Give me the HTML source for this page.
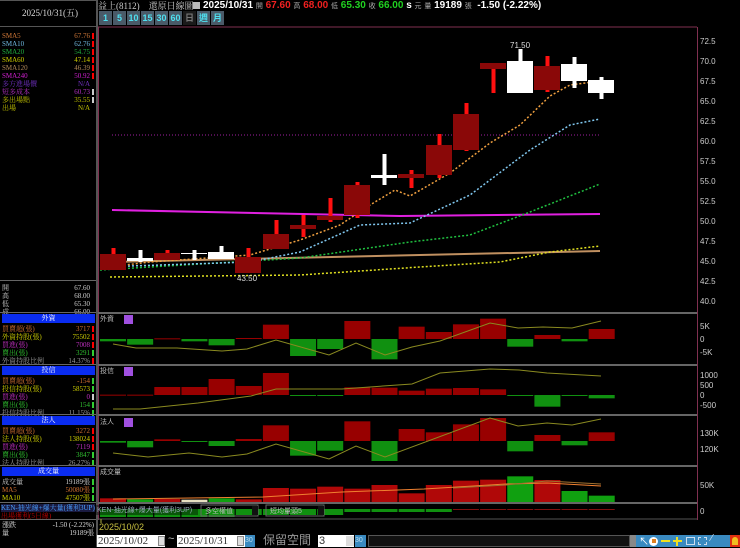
<!DOCTYPE html>
<html><head><meta charset="utf-8">
<style>
*{margin:0;padding:0;box-sizing:border-box}
body{width:740px;height:547px;background:#000;overflow:hidden;position:relative;font-family:"Liberation Sans","Noto Sans CJK TC",sans-serif;color:#ccc}
.a{position:absolute;white-space:nowrap}
.lp{font-size:7px;line-height:8px;font-family:"Liberation Serif","Noto Serif CJK SC",serif}
.r{text-align:right}
.hd{position:absolute;left:2px;width:93px;height:9px;background:#0a2cf0;color:#fff;font-size:7px;line-height:9px;text-align:center;font-family:"Noto Serif CJK SC",serif}
.btn{position:absolute;top:11px;height:14px;width:13px;background:#4a5a68;color:#4fe0f0;font-size:9px;line-height:14px;text-align:center;font-weight:bold}
</style></head><body>
<div class="a" style="left:0;top:0;width:96px;height:27px;border-bottom:1px solid #555;border-top:1px solid #555"></div>
<div class="a lp" style="left:22px;top:9px;font-size:9px;color:#ddd">2025/10/31(五)</div>
<div class="a" style="left:96px;top:0;width:2px;height:547px;background:#555"></div>
<div id="lp"></div>
<div class="a" style="left:0;top:280px;width:96px;height:1px;background:#666"></div>
<div class="hd" style="top:314px">外資</div>
<div class="hd" style="top:366px">投信</div>
<div class="hd" style="top:416px">法人</div>
<div class="hd" style="top:467px">成交量</div>
<div class="a" style="left:0;top:312px;width:96px;height:1px;background:#666"></div>
<div class="a" style="left:0;top:364px;width:96px;height:1px;background:#666"></div>
<div class="a" style="left:0;top:414px;width:96px;height:1px;background:#666"></div>
<div class="a" style="left:0;top:465px;width:96px;height:1px;background:#666"></div>
<div class="a" style="left:0;top:502px;width:96px;height:1px;background:#666"></div>
<div class="a lp" style="left:1px;top:504px;width:94px;height:8px;background:#1a1a40;color:#4aa0ff;overflow:hidden">KEN-抽光線+爆大量(獲利3UP)</div>
<div class="a lp" style="left:1px;top:512px;color:#c00000">出場獲利(5日線)</div>
<div class="a" style="left:0;top:519px;width:96px;height:1px;background:#666"></div>
<div class="a lp" style="left:2px;top:521px;color:#ddd">漲跌</div>
<div class="a lp r" style="left:30px;width:64px;top:521px;color:#ddd">-1.50 (-2.22%)</div>
<div class="a lp" style="left:2px;top:529px;color:#ddd">量</div>
<div class="a lp r" style="left:30px;width:64px;top:529px;color:#ddd">19189張</div>

<div class="a" style="left:98px;top:1px;font-size:9px;line-height:10px;font-family:'Liberation Serif','Noto Serif CJK SC',serif;color:#ccc">益上(8112)&nbsp;&nbsp;&nbsp;&nbsp;還原日線圖</div>
<div class="a" style="left:193px;top:2px;width:7px;height:7px;background:#bbb"></div>
<div class="a" style="left:203px;top:0px;font-size:10px;line-height:12px;font-weight:bold;color:#fff">2025/10/31 <span style="font-size:7px;color:#aaa;font-weight:normal">開</span> <span style="color:#f02020">67.60</span> <span style="font-size:7px;color:#aaa;font-weight:normal">高</span> <span style="color:#f02020">68.00</span> <span style="font-size:7px;color:#aaa;font-weight:normal">低</span> <span style="color:#20d020">65.30</span> <span style="font-size:7px;color:#aaa;font-weight:normal">收</span> <span style="color:#20d020">66.00</span> s <span style="font-size:7px;color:#aaa;font-weight:normal">元</span> <span style="font-size:7px;color:#aaa;font-weight:normal">量</span> 19189 <span style="font-size:7px;color:#aaa;font-weight:normal">張</span> &nbsp;-1.50 (-2.22%)</div>
<div class="btn" style="left:99px">1</div>
<div class="btn" style="left:113px">5</div>
<div class="btn" style="left:127px">10</div>
<div class="btn" style="left:141px">15</div>
<div class="btn" style="left:155px">30</div>
<div class="btn" style="left:169px">60</div>
<div class="btn" style="left:183px;background:#1a1a1a;color:#777">日</div>
<div class="btn" style="left:197px">週</div>
<div class="btn" style="left:211px">月</div>

<svg class="a" style="left:0;top:0" width="740" height="547" id="sv" font-family="Liberation Sans, sans-serif"></svg>

<div class="a" style="left:97px;top:535px;width:68px;height:12px;background:#fff;color:#333;font-size:11px;line-height:12px;padding-left:1px;font-family:'Liberation Serif',serif">2025/10/02</div>
<div class="a" style="left:158px;top:536px;width:7px;height:10px;background:#ddd;border:1px solid #888"></div>
<div class="a" style="left:168px;top:533px;color:#bbb;font-size:11px">~</div>
<div class="a" style="left:177px;top:535px;width:68px;height:12px;background:#fff;color:#333;font-size:11px;line-height:12px;padding-left:1px;font-family:'Liberation Serif',serif">2025/10/31</div>
<div class="a" style="left:237px;top:536px;width:7px;height:10px;background:#ddd;border:1px solid #888"></div>
<div class="a" style="left:245px;top:535px;width:10px;height:12px;background:#3a8ac0;color:#bde;font-size:7px;line-height:12px">30</div>
<div class="a" style="left:263px;top:533px;color:#999;font-size:12px;line-height:14px;font-family:'Noto Sans CJK TC',sans-serif">保留空間</div>
<div class="a" style="left:318px;top:535px;width:36px;height:12px;background:#fff;color:#333;font-size:11px;line-height:12px;padding-left:1px">3</div>
<div class="a" style="left:346px;top:536px;width:8px;height:10px;background:#ddd"></div>
<div class="a" style="left:355px;top:535px;width:11px;height:12px;background:#3a8ac0;color:#bde;font-size:7px;line-height:12px">30</div>
<div class="a" style="left:368px;top:535px;width:262px;height:12px;background:#111;border:1px solid #555"></div>
<div class="a" style="left:630px;top:535px;width:6px;height:12px;background:#888"></div>
<div class="a" style="left:636px;top:535px;width:94px;height:12px;background:#3a8ac0"></div>
<div class="a" style="left:730px;top:535px;width:10px;height:12px;background:#e03010"></div>
<div class="a" style="left:639px;top:533px;color:#fff;font-size:10px">↖</div>
<div class="a" style="left:649px;top:537px;width:9px;height:9px;border-radius:50%;background:#fff"></div>
<div class="a" style="left:652px;top:539px;width:4px;height:4px;background:#e08020"></div>
<div class="a" style="left:661px;top:540px;width:9px;height:2px;background:#f0e020"></div>
<div class="a" style="left:673px;top:540px;width:9px;height:2px;background:#f0e020"></div>
<div class="a" style="left:676px;top:537px;width:2px;height:9px;background:#f0e020"></div>
<div class="a" style="left:686px;top:537px;width:9px;height:8px;border:1px solid #cde"></div>
<div class="a" style="left:698px;top:537px;width:9px;height:8px;border:1px dashed #cde"></div>
<div class="a" style="left:711px;top:533px;color:#cde;font-size:10px">⁄</div>
<div class="a" style="left:732px;top:537px;width:6px;height:8px;border-radius:3px 3px 0 0;background:#f0c020"></div>

<script>
var lp=document.getElementById('lp');
function row(t,v,y,c1,c2,m){var h='<div class="a lp" style="left:2px;top:'+y+'px;color:'+c1+'">'+t+'</div><div class="a lp r" style="left:30px;width:60px;top:'+y+'px;color:'+c2+'">'+v+'</div>';if(m)h+='<div class="a" style="left:92px;top:'+(y+1)+'px;width:2px;height:6px;background:'+m+'"></div>';lp.insertAdjacentHTML('beforeend',h);}
[['SMA5','67.76','#d07838','#d07838','#f00'],['SMA10','62.76','#70b8e0','#70b8e0','#f00'],['SMA20','54.75','#20b040','#20b040','#f00'],['SMA60','47.14','#d0d000','#d0d000','#f00'],['SMA120','46.39','#b08858','#b08858','#f00'],['SMA240','50.92','#d020d0','#d020d0','#f00'],['多方進場價','N/A','#7030c0','#7030c0',''],['短多成本','60.73','#b030c0','#b030c0','#ccc'],['多出場點','35.55','#c0c000','#c0c000','#ccc'],['出場','N/A','#c0c000','#c0c000','']].forEach(function(r,i){row(r[0],r[1],32+i*8,r[2],r[3],r[4]);});
[['開','67.60'],['高','68.00'],['低','65.30'],['成','66.00']].forEach(function(r,i){row(r[0],r[1],284+i*8,'#ccc','#ccc','');});
function blk(y,rows){rows.forEach(function(r,i){row(r[0],r[1],y+i*8,r[2],r[3],r[4]);});}
blk(325,[['買賣超(張)','3717','#d07030','#d07030','#f00'],['外資持股(張)','75502','#d0d000','#d0d000','#f00'],['買進(張)','7008','#c030c0','#c030c0','#f00'],['賣出(張)','3291','#30c030','#30c030','#3c3'],['外資持股比例','14.37%','#999','#999','#f00']]);
blk(377,[['買賣超(張)','-154','#d07030','#d07030','#3c3'],['投信持股(張)','58573','#d0d000','#d0d000','#3c3'],['買進(張)','0','#c030c0','#c030c0','#ccc'],['賣出(張)','154','#30c030','#30c030','#3c3'],['投信持股比例','11.15%','#999','#999','#3c3']]);
blk(427,[['買賣超(張)','3272','#d07030','#d07030','#f00'],['法人持股(張)','138024','#d0d000','#d0d000','#f00'],['買進(張)','7119','#c030c0','#c030c0','#f00'],['賣出(張)','3847','#30c030','#30c030','#3c3'],['法人持股比例','26.27%','#999','#999','#3c3']]);
blk(478,[['成交量','19189張','#ccc','#ccc','#3c3'],['MA5','50080張','#d07030','#d07030','#3c3'],['MA10','47507張','#d0d000','#d0d000','#3c3']]);

var s='';
function L(x1,y1,x2,y2,c,w,d){s+='<line x1="'+x1+'" y1="'+y1+'" x2="'+x2+'" y2="'+y2+'" stroke="'+c+'" stroke-width="'+(w||1)+'"'+(d?' stroke-dasharray="'+d+'"':'')+'/>';}
function R(x,y,w,h,c){s+='<rect x="'+x+'" y="'+y+'" width="'+w+'" height="'+Math.max(h,1)+'" fill="'+c+'"/>';}
function T(x,y,t,c,sz,a){s+='<text x="'+x+'" y="'+y+'" fill="'+c+'" font-size="'+(sz||8)+'"'+(a?' text-anchor="'+a+'"':'')+'>'+t+'</text>';}
function P(pts,c,w,d){s+='<polyline fill="none" points="'+pts+'" stroke="'+c+'" stroke-width="'+(w||1)+'"'+(d?' stroke-dasharray="'+d+'"':'')+'/>';}
L(98,27,697,27,'#803050');L(98.5,27,98.5,520,'#803050');L(697.5,27,697.5,520,'#803050');
[313,365,415,466,503].forEach(function(y){L(98,y,697,y,'#666',2);});
L(98,519,697,519,'#555');
var labs=['72.5','70.0','67.5','65.0','62.5','60.0','57.5','55.0','52.5','50.0','47.5','45.0','42.5','40.0'];
labs.forEach(function(t,i){T(700,44+i*20,t,'#ccc',8);});
L(112,135,600,135,'#a020a0',1,'1,2');
P('112,210 400,216 600,214','#e020e0',2);
P('110,262 600,251','#c09060',2);
P('110,277 300,275 420,267 500,262 550,252 600,246','#e0e020',1.5,'2,2');
P('100,270 300,258 410,242 470,235 530,212 580,192 600,184','#20c040',1.5,'2,2');
P('100,267 250,262 300,252 360,225 410,223 470,195 530,150 570,125 600,119','#80c8f0',1.5,'2,2');
P('100,268 150,262 250,255 300,240 340,225 370,205 395,190 410,196 450,173 490,143 520,125 550,96 570,85 600,81','#f0a040',1.5,'2,2');
var C=[[100,254,270,248,270,'r'],[127,258,261,250,262,'w'],[154,253,260,250,260,'r'],[181,253,254,250,260,'w'],[208,252,259,246,259,'w'],[235,257,273,248,273,'r'],[263,234,249,220,249,'r'],[290,225,229,215,237,'r'],[317,216,220,198,222,'r'],[344,185,215,182,218,'r'],[371,175,178,154,185,'w'],[398,174,178,170,188,'r'],[426,145,175,134,178,'r'],[453,114,150,103,151,'r'],[480,63,69,63,93,'r'],[507,61,93,49,93,'w'],[534,66,90,56,92,'r'],[561,64,81,57,88,'w'],[588,80,93,77,99,'w']];
C.forEach(function(c){var wc=c[5]=='r'?'#ff1010':'#fff',bc=c[5]=='r'?'#8a0808':'#fff';R(c[0]+11.5,c[3],4,c[4]-c[3],wc);R(c[0],c[1],26,c[2]-c[1],bc);});
T(510,48,'71.50','#ddd',8);T(237,281,'43.50','#ddd',8);
var fz=[['g',117,124],['g',117,134],['r',115,117],['g',117,124],['g',117,136],['r',114,117],['r',74,117],['g',117,168],['g',117,147],['r',63,117],['g',117,178],['r',80,117],['r',96,117],['r',73,117],['r',56,117],['g',117,140],['r',105,117],['g',117,124],['r',87,117]];
fz.forEach(function(a,i){var x=100+27.15*i,t=300+a[1]/3,b=300+a[2]/3;R(x,t,26,b-t,a[0]=='r'?'#980000':'#109010');});
P('113,344 136,348 177,348 222,351 247,349 276,340 329,355 356,343 385,355 412,347 440,341 490,323 518,328 543,327 572,328 601,321','#8a8a20');
T(100,321,'外資','#bbb',7);R(124,315,9,9,'#a050e0');
T(700,329,'5K','#ccc',8);T(700,342,'0','#ccc',8);T(700,355,'-5K','#ccc',8);
var tx=[['r',284,285],['r',284,285],['r',261,285],['r',261,285],['r',237,285],['r',258,285],['r',219,285],['g',285,288],['g',285,288],['r',262,285],['r',263,285],['r',272,285],['r',266,285],['r',264,285],['r',268,285],['g',285,287],['g',285,320],['g',285,287],['g',285,295]];
tx.forEach(function(a,i){var x=100+27.15*i,t=300+a[1]/3,b=300+a[2]/3;R(x,t,26,b-t,a[0]=='r'?'#980000':'#109010');});
P('113,409 140,409 198,403 251,396 276,389 342,389 383,386 412,384 440,373 490,369 519,370 547,373 601,376','#8a8a20');
T(100,373,'投信','#bbb',7);R(124,367,9,9,'#a050e0');
T(700,378,'1000','#ccc',8);T(700,388,'500','#ccc',8);T(700,398,'0','#ccc',8);T(700,408,'-500','#ccc',8);
var fr=[['g',93,98],['g',93,112],['r',88,93],['g',93,96],['g',93,108],['r',87,93],['r',46,93],['g',93,137],['g',93,122],['r',34,93],['g',93,153],['r',57,93],['r',67,93],['r',43,93],['r',24,93],['g',93,124],['r',75,93],['g',93,106],['r',67,93]];
fr.forEach(function(a,i){var x=100+27.15*i,t=410+a[1]/3,b=410+a[2]/3;R(x,t,26,b-t,a[0]=='r'?'#980000':'#109010');});
P('113,453 148,457 189,453 222,457 247,454 276,444 329,459 356,446 385,457 490,418 518,426 547,423 572,425 601,419','#8a8a20');
T(100,424,'法人','#bbb',7);R(124,418,9,9,'#a050e0');
T(700,436,'130K','#ccc',8);T(700,452,'120K','#ccc',8);
var vl=[['r',265],['g',268],['r',267],['w',269],['g',265],['r',268],['r',234],['r',236],['r',230],['r',236],['r',225],['r',250],['r',225],['r',212],['r',209],['g',199],['r',210],['g',243],['g',257]];
vl.forEach(function(a,i){var x=100+27.15*i,t=410+a[1]/3;R(x,t,26,502-t,a[0]=='r'?'#b00808':a[0]=='g'?'#10a010':'#e8e0c0');});
P('113,499 263,497 342,492 424,489 506,484 547,483 601,486','#f08030');
P('453,488 506,485 547,481 601,484','#a07030');
T(100,474,'成交量','#bbb',7);
T(700,488,'50K','#ccc',8);
for(var i=0;i<19;i++){var x=100+27.15*i;if(i<13)R(x,509,26,i<5?8:i<9?6:3,'#109010');else R(x,509,26,1,'#801010');}
R(96,505,102,10,'rgba(0,0,0,0.4)');
T(97,512,'KEN-抽光線+爆大量(獲利3UP)','#9ab',7);
s+='<rect x="201" y="505" width="57" height="11" fill="none" stroke="#666"/>';R(252,506,6,9,'#111');T(205,513,'多空權值','#bbb',7);
s+='<rect x="266" y="505" width="58" height="11" fill="none" stroke="#666"/>';R(318,506,6,9,'#111');T(270,513,'短均量頭5','#bbb',7);
T(700,514,'0','#ccc',8);
L(101,519,101,523,'#b0b040');
T(99,530,'2025/10/02','#c8c040',9);
document.getElementById('sv').innerHTML=s;
</script>
</body></html>
